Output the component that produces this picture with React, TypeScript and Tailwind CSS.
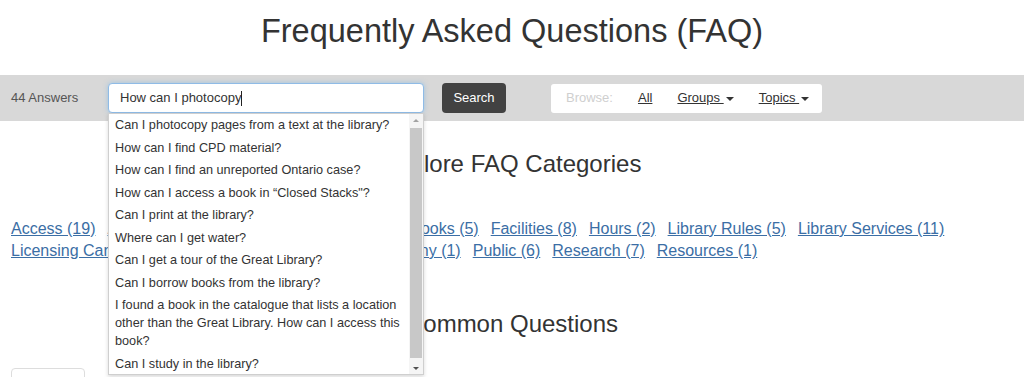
import { memo } from 'react';

/**
 * FAQ page with the search box open on its suggestion list.
 */

const suggestions = [
  'Can I photocopy pages from a text at the library?',
  'How can I find CPD material?',
  'How can I find an unreported Ontario case?',
  'How can I access a book in \u201cClosed Stacks"?',
  'Can I print at the library?',
  'Where can I get water?',
  'Can I get a tour of the Great Library?',
  'Can I borrow books from the library?',
  'I found a book in the catalogue that lists a location other than the Great Library. How can I access this book?',
  'Can I study in the library?',
];

const categories = [
  'Access (19)',
  'Accessibility (3)',
  'Articles (4)',
  'Catalog (1)',
  'Books (5)',
  'Facilities (8)',
  'Hours (2)',
  'Library Rules (5)',
  'Library Services (11)',
  'Licensing Canada (2)',
  'Legal Research Tasks (4)',
  'Company (1)',
  'Public (6)',
  'Research (7)',
  'Resources (1)',
];

function Caret() {
  return (
    <span className="inline-block ml-[2px] align-middle w-0 h-0 border-l-[4px] border-r-[4px] border-t-[4px] border-l-transparent border-r-transparent border-t-[#333]" />
  );
}

function App() {
  return (
    <div className="w-[1024px] h-[377px] overflow-hidden bg-white text-[#333] [font-family:'Liberation_Sans',Arial,sans-serif]">
      {/* Page title */}
      <div className="h-[75px] pt-[13px]">
        <h1 className="text-center text-[32.5px] leading-[36px] font-normal">Frequently Asked Questions (FAQ)</h1>
      </div>

      {/* Search bar */}
      <div className="relative h-[46px] bg-[#d8d8d8] flex items-center text-[13px]">
        <span className="ml-[11px] w-[97px] text-[#555]">44 Answers</span>
        <div className="w-[316px] h-[30px] bg-white rounded-[4px] border border-[#8fbbe6] shadow-[0_0_5px_rgba(102,175,233,0.5)] flex items-center pl-[11px]">
          <span>How can I photocopy</span>
          <span className="w-px h-[15px] bg-[#222]" />
        </div>
        <button className="ml-[18px] w-[64px] h-[30px] rounded-[4px] bg-[#424242] text-white">Search</button>
        <div className="ml-[45px] w-[271px] h-[29px] bg-white rounded-[3px] flex items-center pl-[15px] gap-[25px]">
          <span className="text-[#cfcfcf]">Browse:</span>
          <span className="underline">All</span>
          <span className="underline">Groups <Caret /></span>
          <span className="underline">Topics <Caret /></span>
        </div>

        {/* Suggestion list */}
        <div className="absolute z-10 left-[108px] top-[38px] w-[316px] h-[262px] bg-white border border-[#cfcfcf] shadow-[0_2px_4px_rgba(0,0,0,0.15)] flex">
          <ul className="flex-1 pl-[6px] text-[12.7px]">
            {suggestions.map((q) => (
              <li key={q} className="py-[2.25px] leading-[18px] text-[#333]">
                {q}
              </li>
            ))}
          </ul>
          <div className="w-[14px] flex flex-col items-center bg-[#f5f5f5]">
            <div className="h-[12px] flex items-center justify-center">
              <span className="w-0 h-0 border-l-[3px] border-r-[3px] border-b-[3px] border-l-transparent border-r-transparent border-b-[#a3a3a3]" />
            </div>
            <div className="flex-1 w-[12px] bg-[#c8c8c8] mt-[2px] mb-[4px]" />
            <div className="h-[12px] flex items-center justify-center">
              <span className="w-0 h-0 border-l-[3px] border-r-[3px] border-t-[3px] border-l-transparent border-r-transparent border-t-[#505050]" />
            </div>
          </div>
        </div>
      </div>

      {/* Page content behind the list */}
      <h2 className="mt-[31px] text-center text-[24px] leading-[24px] font-normal">Explore FAQ Categories</h2>
      <div className="mt-[42px] px-[11px] flex flex-wrap gap-x-[12px] text-[16px] leading-[22px]">
        {categories.map((c) => (
          <a key={c} href="#" className="text-[#3b6ea5] underline">
            {c}
          </a>
        ))}
      </div>
      <h2 className="mt-[50px] text-center text-[24px] leading-[24px] font-normal">Common Questions</h2>
      <div className="mt-[32px] ml-[11px] w-[74px] h-[30px] border border-[#ddd] rounded-[4px]" />
    </div>
  );
}

export default memo(App);
